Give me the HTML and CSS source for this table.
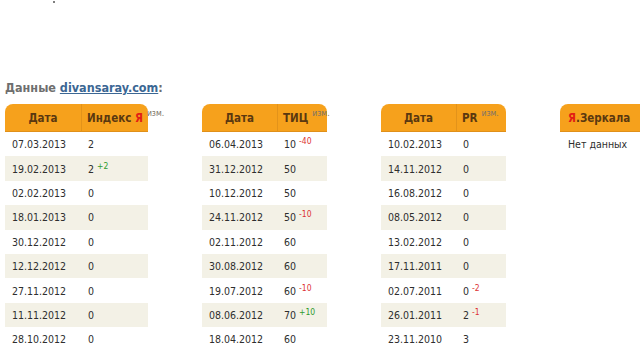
FILE: index.html
```html
<!DOCTYPE html>
<html lang="ru">
<head>
<meta charset="utf-8">
<title>Данные divansaray.com</title>
<link rel="stylesheet" href="styles.css">
</head>
<body>
<div class="topline"><span class="dot"></span></div>
<h2 class="title">Данные <a href="#">divansaray.com</a>:</h2>
<div class="tables">
  <table class="stat t1">
    <colgroup><col class="w-date"><col class="w-val1"></colgroup>
    <thead><tr><th class="c-date">Дата</th><th class="c-val">Индекс <span class="ya">Я</span><sup class="izm">изм.</sup></th></tr></thead>
    <tbody>
      <tr><td>07.03.2013</td><td>2</td></tr>
      <tr><td>19.02.2013</td><td>2 <sup class="up">+2</sup></td></tr>
      <tr><td>02.02.2013</td><td>0</td></tr>
      <tr><td>18.01.2013</td><td>0</td></tr>
      <tr><td>30.12.2012</td><td>0</td></tr>
      <tr><td>12.12.2012</td><td>0</td></tr>
      <tr><td>27.11.2012</td><td>0</td></tr>
      <tr><td>11.11.2012</td><td>0</td></tr>
      <tr><td>28.10.2012</td><td>0</td></tr>
    </tbody>
  </table>
  <table class="stat t2">
    <colgroup><col class="w-date2"><col class="w-val2"></colgroup>
    <thead><tr><th class="c-date">Дата</th><th class="c-val">ТИЦ<sup class="izm">изм.</sup></th></tr></thead>
    <tbody>
      <tr><td>06.04.2013</td><td>10 <sup class="down">-40</sup></td></tr>
      <tr><td>31.12.2012</td><td>50</td></tr>
      <tr><td>10.12.2012</td><td>50</td></tr>
      <tr><td>24.11.2012</td><td>50 <sup class="down">-10</sup></td></tr>
      <tr><td>02.11.2012</td><td>60</td></tr>
      <tr><td>30.08.2012</td><td>60</td></tr>
      <tr><td>19.07.2012</td><td>60 <sup class="down">-10</sup></td></tr>
      <tr><td>08.06.2012</td><td>70 <sup class="up">+10</sup></td></tr>
      <tr><td>18.04.2012</td><td>60</td></tr>
    </tbody>
  </table>
  <table class="stat t3">
    <colgroup><col class="w-date2"><col class="w-val2"></colgroup>
    <thead><tr><th class="c-date">Дата</th><th class="c-val">PR<sup class="izm">изм.</sup></th></tr></thead>
    <tbody>
      <tr><td>10.02.2013</td><td>0</td></tr>
      <tr><td>14.11.2012</td><td>0</td></tr>
      <tr><td>16.08.2012</td><td>0</td></tr>
      <tr><td>08.05.2012</td><td>0</td></tr>
      <tr><td>13.02.2012</td><td>0</td></tr>
      <tr><td>17.11.2011</td><td>0</td></tr>
      <tr><td>02.07.2011</td><td>0 <sup class="down">-2</sup></td></tr>
      <tr><td>26.01.2011</td><td>2 <sup class="down">-1</sup></td></tr>
      <tr><td>23.11.2010</td><td>3</td></tr>
    </tbody>
  </table>
  <table class="stat t4">
    <colgroup><col class="w-mirror"></colgroup>
    <thead><tr><th class="c-mirror"><span class="ya">Я</span>.Зеркала</th></tr></thead>
    <tbody>
      <tr><td class="nodata">Нет данных</td></tr>
    </tbody>
  </table>
</div>
</body>
</html>
```

FILE: styles.css
```css
html, body {
  margin: 0;
  padding: 0;
  background: #ffffff;
  overflow: hidden;
}
body {
  width: 640px;
  height: 350px;
  padding-left: 5px;
  box-sizing: border-box;
  font-family: "DejaVu Sans Condensed", "DejaVu Sans", sans-serif;
  font-stretch: condensed;
  font-size: 10.5px;
  color: #2e2e2e;
}
.topline {
  height: 76px;
  padding-left: 48px;
  padding-top: 1px;
  box-sizing: border-box;
}
.dot {
  display: block;
  width: 2px;
  height: 2px;
  border-radius: 1px;
  background: #555555;
}
.title {
  margin: 0;
  height: 28px;
  font-size: 12.5px;
  font-weight: bold;
  color: #6e6e6e;
  line-height: 24px;
}
.title a {
  color: #3b6794;
  text-decoration: underline;
}
.tables {
  display: flex;
  align-items: flex-start;
  gap: 54px;
  width: 720px;
}
.stat {
  border-collapse: separate;
  border-spacing: 0;
  table-layout: fixed;
  flex: none;
}
.t1 { width: 143px; }
.t2, .t3 { width: 125px; }
.t4 { width: 90px; }
.w-date { width: 77px; }
.w-val1 { width: 66px; }
.w-date2 { width: 76px; }
.w-val2 { width: 49px; }
.w-mirror { width: 90px; }
.stat th {
  background: #f6a11c;
  height: 27px;
  padding: 0;
  border-bottom: 1px solid #e0901a;
  color: #5a3810;
  font-weight: bold;
  font-size: 11.5px;
  white-space: nowrap;
  vertical-align: middle;
  overflow: visible;
}
.stat th.c-date {
  text-align: center;
  border-right: 1px solid #e3931a;
  border-top-left-radius: 8px;
}
.stat th.c-val {
  text-align: left;
  padding-left: 5px;
  border-top-right-radius: 8px;
}
.stat th.c-mirror {
  text-align: left;
  padding-left: 8px;
  border-top-left-radius: 8px;
}
.ya {
  color: #e31e14;
}
.izm {
  font-size: 8.5px;
  font-weight: normal;
  color: #7d7468;
  margin-left: 4px;
  vertical-align: 6px;
  line-height: 0;
}
.stat td {
  height: 24.4px;
  padding: 0 0 0 7px;
  white-space: nowrap;
  vertical-align: middle;
}
.stat td + td {
  padding-left: 6px;
}
.stat tbody tr:nth-child(even) td {
  background: #f3f1e6;
}
.stat sup {
  line-height: 0;
}
.up {
  color: #2f9a2f;
  font-size: 8.5px;
}
.down {
  color: #dd3333;
  font-size: 8.5px;
}
.t4 .nodata {
  padding-left: 8px;
}
```
